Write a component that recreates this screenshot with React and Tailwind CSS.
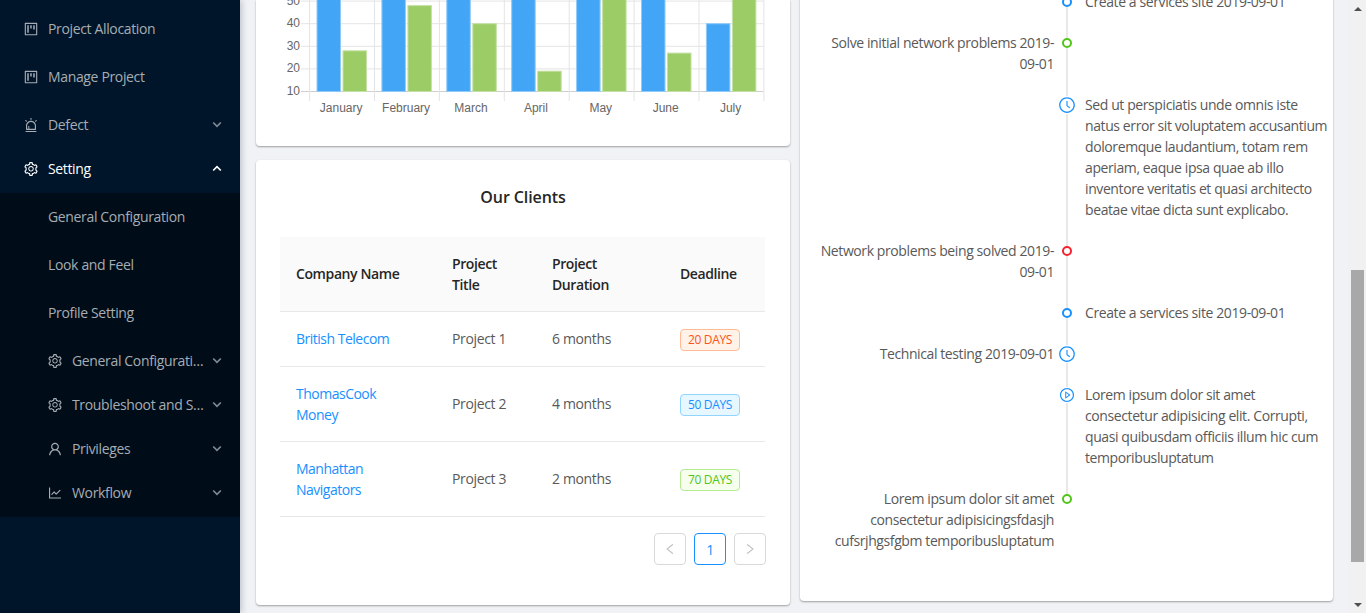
import React from "react";
import {
  AiOutlineProject,
  AiOutlineAlert,
  AiOutlineSetting,
  AiOutlineUser,
  AiOutlineLineChart,
  AiOutlineLeft,
  AiOutlineRight,
  AiOutlineClockCircle,
  AiOutlinePlayCircle,
} from "react-icons/ai";

function Chevron({ up }) {
  return (
    <svg width="10" height="7" viewBox="0 0 10 7" className={up ? "text-white shrink-0" : "text-[#7f8a94] shrink-0"} fill="none" stroke="currentColor" strokeWidth="1.7">
      <polyline points={up ? "1.2,5.5 5,1.7 8.8,5.5" : "1.2,1.5 5,5.3 8.8,1.5"} />
    </svg>
  );
}

function MenuItem({ icon: Icon, label, mb = "mb-2", arrow, up, active, sub }) {
  return (
    <div className={`flex items-center h-10 pb-px ${mb} ${sub ? "pl-12" : "pl-6"} pr-[18px] ${active ? "text-white" : "text-[#a6adb4]"}`}>
      {Icon && <Icon className="text-[16px] shrink-0 -ml-px mr-[9px]" />}
      <span className="flex-1 min-w-0 truncate">{label}</span>
      {arrow && <span className="ml-[8px] flex"><Chevron up={up} /></span>}
    </div>
  );
}

function Sidebar() {
  return (
    <aside className="w-[240px] h-[613px] shrink-0 bg-[#001529] pt-[9px] shadow-[2px_0_6px_rgba(0,21,41,0.2)] z-10">
      <MenuItem icon={AiOutlineProject} label="Project Allocation" />
      <MenuItem icon={AiOutlineProject} label="Manage Project" />
      <MenuItem icon={AiOutlineAlert} label="Defect" arrow mb="mb-1" />
      <MenuItem icon={AiOutlineSetting} label="Setting" arrow up active mb="mb-1" />
      <div className="bg-[#000c17] pt-1 pb-1">
        <div className="flex items-center h-10 pb-px mb-2 pl-12 text-[#a6adb4]">General Configuration</div>
        <div className="flex items-center h-10 pb-px mb-2 pl-12 text-[#a6adb4]">Look and Feel</div>
        <div className="flex items-center h-10 pb-px mb-2 pl-12 text-[#a6adb4]">Profile Setting</div>
        <MenuItem sub icon={AiOutlineSetting} label="General Configuration" arrow mb="mb-1" />
        <MenuItem sub icon={AiOutlineSetting} label="Troubleshoot and Support" arrow mb="mb-1" />
        <MenuItem sub icon={AiOutlineUser} label="Privileges" arrow mb="mb-1" />
        <MenuItem sub icon={AiOutlineLineChart} label="Workflow" arrow mb="mb-0" />
      </div>
    </aside>
  );
}

const months = ["January", "February", "March", "April", "May", "June", "July"];
const blue = [65, 59, 80, 81, 56, 55, 40];
const green = [28, 48, 40, 19, 86, 27, 90];
const y = (v) => 91.5 - (v - 10) * 2.26;

function Chart() {
  return (
    <svg width="534" height="146" viewBox="256 0 534 146" className="block tracking-normal" fontFamily="'Liberation Sans', Arial, sans-serif" fontSize="12" fill="#666">
      {[10, 20, 30, 40, 50].map((v) => (
        <g key={v}>
          <line x1="301" x2="763.5" y1={y(v)} y2={y(v)} stroke={v === 10 ? "#cfcfcf" : "#e4e4e4"} />
          <text x="300" y={y(v) + 3.5} textAnchor="end">{v}</text>
        </g>
      ))}
      {[0, 1, 2, 3, 4, 5, 6, 7].map((i) => (
        <line key={i} x1={309.6 + i * 64.9} x2={309.6 + i * 64.9} y1="0" y2="101" stroke="#e4e4e4" />
      ))}
      {months.map((m, i) => {
        const x0 = 309.6 + i * 64.9;
        return (
          <g key={m}>
            <rect x={x0 + 7.4} y={y(blue[i])} width="23.5" height={91.5 - y(blue[i])} fill="#42a5f5" stroke="#90caf9" strokeWidth="1" />
            <rect x={x0 + 33.4} y={y(green[i])} width="23.5" height={91.5 - y(green[i])} fill="#9ccc65" stroke="#c5e1a5" strokeWidth="1" />
            <text x={x0 + 31.6} y="112" textAnchor="middle">{m}</text>
          </g>
        );
      })}
    </svg>
  );
}

function Tag({ cls, children }) {
  return (
    <span className={`inline-block w-[60px] h-[22px] border rounded text-center text-[12px] leading-[20px] ${cls}`}>{children}</span>
  );
}

const rows = [
  ["British Telecom", "Project 1", "6 months", "20 DAYS", "bg-[#fff2e8] border-[#ffbb96] text-[#fa541c]"],
  ["ThomasCook Money", "Project 2", "4 months", "50 DAYS", "bg-[#e6f7ff] border-[#91d5ff] text-[#1890ff]"],
  ["Manhattan Navigators", "Project 3", "2 months", "70 DAYS", "bg-[#f6ffed] border-[#b7eb8f] text-[#52c41a]"],
];

function Clients() {
  return (
    <section className="bg-white rounded shadow-[0_1px_2px_rgba(0,0,0,0.35)] px-6 pt-6 pb-10">
      <h2 className="text-center text-[16px] font-[550] tracking-[-0.1px] leading-[27px] mb-[26px] text-[#262626]">Our Clients</h2>
      <table className="w-[485px] table-fixed border-collapse text-left">
        <colgroup>
          <col className="w-[156px]" />
          <col className="w-[100px]" />
          <col className="w-[128px]" />
          <col className="w-[101px]" />
        </colgroup>
        <thead>
          <tr className="bg-[#fafafa] border-b border-[#e8e8e8] text-[#262626]">
            <th className="px-4 pt-[15px] pb-4 font-[550] tracking-[-0.4px]">Company Name</th>
            <th className="p-4 font-[550] tracking-[-0.4px]">Project Title</th>
            <th className="p-4 font-[550] tracking-[-0.4px]">Project Duration</th>
            <th className="px-4 pt-[15px] pb-4 font-[550] tracking-[-0.4px]">Deadline</th>
          </tr>
        </thead>
        <tbody>
          {rows.map((r, i) => (
            <tr key={r[0]} className="border-b border-[#e8e8e8]">
              <td className={`px-4 pb-4 text-[#1890ff] tracking-[-0.5px] ${i === 0 ? "pt-[15px]" : "pt-4"}`}>{r[0]}</td>
              <td className="px-4 pt-[15px] pb-4">{r[1]}</td>
              <td className="px-4 pt-[15px] pb-4">{r[2]}</td>
              <td className="px-4 pt-[17px] pb-[15px] align-middle"><div className="flex"><Tag cls={r[4]}>{r[3]}</Tag></div></td>
            </tr>
          ))}
        </tbody>
      </table>
      <div className="flex justify-end gap-2 mt-4">
        <div className="w-8 h-8 border border-[#d9d9d9] rounded flex items-center justify-center text-[#bfbfbf]"><AiOutlineLeft className="text-[14px]" /></div>
        <div className="w-8 h-8 border border-[#1890ff] rounded flex items-center justify-center text-[#1890ff]">1</div>
        <div className="w-8 h-8 border border-[#d9d9d9] rounded flex items-center justify-center text-[#bfbfbf]"><AiOutlineRight className="text-[14px]" /></div>
      </div>
    </section>
  );
}

function Dot({ color }) {
  return <div className={`w-[10px] h-[10px] rounded-full border-2 bg-white shrink-0 ${color}`} />;
}

function TimelineRow({ left, right, marker, top = 6, last, pb = "pb-5" }) {
  return (
    <div className="grid grid-cols-[240px_26px_249px]">
      <div className={`text-right ${pb}`}>{left}</div>
      <div className="flex flex-col items-center">
        <div className="w-[2px] bg-[#e8e8e8] shrink-0" style={{ height: top }} />
        {marker}
        {!last && <div className="w-[2px] bg-[#e8e8e8] flex-1" />}
      </div>
      <div className={`pl-[5px] ${pb}`}>{right}</div>
    </div>
  );
}

function Timeline() {
  const clock = "text-[#1890ff] text-[18px] shrink-0 bg-white";
  const play = "text-[#1890ff] text-[16px] shrink-0 bg-white";
  return (
    <section className="w-[533px] h-[610px] -mt-[9px] bg-white rounded shadow-[0_1px_2px_rgba(0,0,0,0.35)] pl-[14px] tracking-[-0.4px]">
      <TimelineRow right="Create a services site 2019-09-01" marker={<Dot color="border-[#1890ff]" />} />
      <TimelineRow left="Solve initial network problems 2019-09-01" marker={<Dot color="border-[#52c41a]" />} />
      <TimelineRow
        right="Sed ut perspiciatis unde omnis iste natus error sit voluptatem accusantium doloremque laudantium, totam rem aperiam, eaque ipsa quae ab illo inventore veritatis et quasi architecto beatae vitae dicta sunt explicabo."
        marker={<AiOutlineClockCircle className={clock} />}
        top={2}
      />
      <TimelineRow left="Network problems being solved 2019-09-01" marker={<Dot color="border-[#f5222d]" />} />
      <TimelineRow right="Create a services site 2019-09-01" marker={<Dot color="border-[#1890ff]" />} />
      <TimelineRow left="Technical testing 2019-09-01" marker={<AiOutlineClockCircle className={clock} />} top={2} />
      <TimelineRow
        right="Lorem ipsum dolor sit amet consectetur adipisicing elit. Corrupti, quasi quibusdam officiis illum hic cum temporibusluptatum"
        marker={<AiOutlinePlayCircle className={play} />}
        top={3}
      />
      <TimelineRow
        left="Lorem ipsum dolor sit amet consectetur adipisicingsfdasjh cufsrjhgsfgbm temporibusluptatum"
        marker={<Dot color="border-[#52c41a]" />}
        last
      />
    </section>
  );
}

function Scrollbar() {
  return (
    <div className="w-[17px] h-[613px] shrink-0 bg-[#f1f1f1] flex flex-col items-center">
      <div className="h-[17px] flex items-center justify-center shrink-0">
        <div className="w-0 h-0 border-x-[4px] border-x-transparent border-b-[4px] border-b-[#505050]" />
      </div>
      <div className="h-[253px] shrink-0" />
      <div className="w-[13px] h-[292px] bg-[#a8a8a8] shrink-0" />
      <div className="flex-1" />
      <div className="h-[17px] flex items-center justify-center shrink-0">
        <div className="w-0 h-0 border-x-[4px] border-x-transparent border-t-[4px] border-t-[#505050]" />
      </div>
    </div>
  );
}

export default function App() {
  return (
    <div className="flex h-[613px] w-[1366px] overflow-hidden bg-[#f0f2f5] text-[14px] leading-[21px] text-[#595959] font-['Open_Sans',sans-serif] tracking-[-0.35px]">
      <Sidebar />
      <main className="flex-1 flex gap-[10px] pl-4 pr-4 min-w-0">
        <div className="w-[534px] shrink-0 flex flex-col gap-[14px]">
          <div className="h-[146px] shrink-0 bg-white rounded-b shadow-[0_1px_2px_rgba(0,0,0,0.35)] overflow-hidden">
            <Chart />
          </div>
          <Clients />
        </div>
        <div className="w-[533px] shrink-0">
          <Timeline />
        </div>
      </main>
      <Scrollbar />
    </div>
  );
}
